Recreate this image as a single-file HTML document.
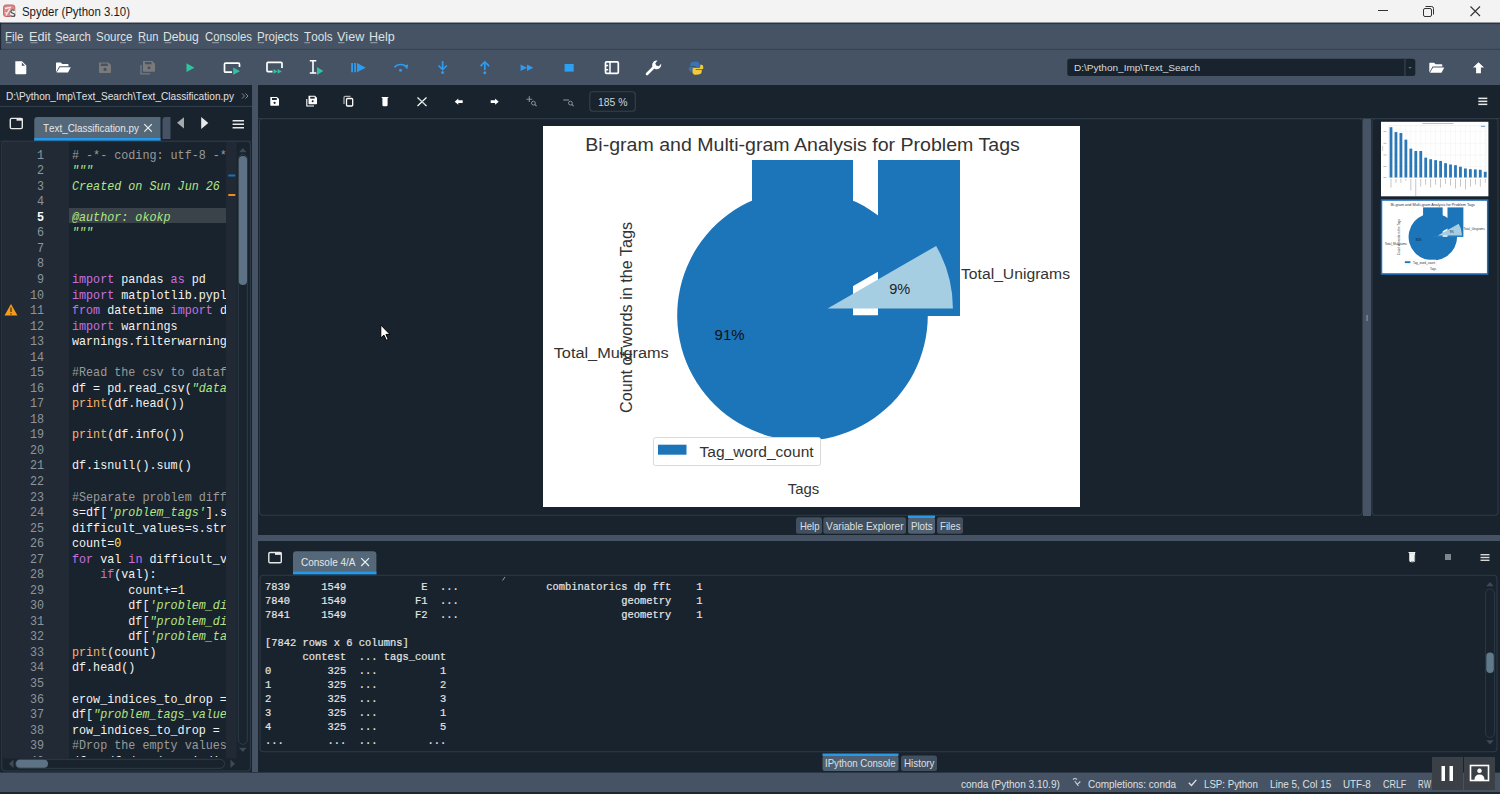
<!DOCTYPE html>
<html><head><meta charset="utf-8"><title>Spyder</title><style>*{margin:0;padding:0;box-sizing:border-box}
html,body{width:1500px;height:794px;overflow:hidden;background:#19232D}
.t{position:absolute;white-space:pre;line-height:1;font-kerning:none}
svg{position:absolute;left:0;top:0}
</style></head>
<body>
<svg width="1500" height="794" viewBox="0 0 1500 794" shape-rendering="geometricPrecision">
<rect x="0" y="0" width="1500" height="22.8" fill="#f3f3f3" />
<rect x="0" y="22.8" width="1500" height="62.2" fill="#455364" />
<rect x="0" y="22.8" width="1500" height="1.3" fill="#2b3643" />
<rect x="0" y="48.8" width="1500" height="1" fill="#34404d" />
<rect x="0" y="22.8" width="1.1" height="26.8" fill="#1f2935" />
<rect x="0" y="85" width="1500" height="687" fill="#19232D" />
<rect x="252" y="85" width="6" height="687" fill="#455364" />
<rect x="258" y="535" width="1242" height="6" fill="#455364" />
<rect x="0" y="772.6" width="1500" height="19.4" fill="#455364" />
<rect x="0" y="792" width="1500" height="2" fill="#1e262e" />
<rect x="3.6" y="5" width="11.2" height="11.5" rx="2.2" fill="#d88a8a" stroke="#c86464" stroke-width="1"/>
<path d="M5 8.5 L11 7.2 M6 15.5 L10 8.5 M4.8 12.5 L7.5 13.5" stroke="#fbeaea" stroke-width="1.3"/>
<rect x="10.2" y="9.6" width="5" height="7.2" fill="#f3f3f3"/>
<path d="M14.6 10.6 Q13.8 9.9 12.6 9.9 Q10.8 9.9 10.8 11.4 Q10.8 12.6 12.7 13.1 Q14.8 13.6 14.8 14.9 Q14.8 16.4 12.7 16.4 Q11.3 16.4 10.4 15.6" fill="none" stroke="#555" stroke-width="1.35"/>
<rect x="1378" y="10" width="10" height="1" fill="#333" />
<rect x="1423.5" y="8.5" width="8" height="8" rx="1.5" fill="none" stroke="#333" stroke-width="1"/>
<path d="M1425.5 6.5 h6 a2 2 0 0 1 2 2 v6" fill="none" stroke="#333" stroke-width="1"/>
<path d="M1470.5 6.5 L1480 16 M1480 6.5 L1470.5 16" stroke="#333" stroke-width="1.1"/>
<path d="M15.3 61.2 H22 L26.3 65.5 V73.2 Q26.3 74.2 25.3 74.2 H16.3 Q15.3 74.2 15.3 73.2 Z" fill="#ffffff"/>
<path d="M21.8 62.5 L25 65.7 H21.8 Z" fill="#455364"/>
<path d="M56 63.2 Q56 62.5 56.7 62.5 H60.8 L62.3 64 H67.8 Q68.5 64 68.5 64.7 V66.3 H59.3 L56 72.3 Z" fill="#ffffff"/>
<path d="M59.8 67.2 H70.8 L68 72.6 H56.6 Z" fill="#ffffff"/>
<path d="M99 62.5 H108.5 L111 65 V72.3 Q111 73 110.3 73 H99.7 Q99 73 99 72.3 Z" fill="#7a7a7a"/>
<rect x="100.8" y="63.6" width="7" height="2.4" fill="#455364" />
<circle cx="105" cy="69.4" r="1.6" fill="#455364"/>
<path d="M141 65 V73.8 H150" fill="none" stroke="#7a7a7a" stroke-width="1.3"/>
<path d="M143 61 H152.3 L155 63.7 V71 Q155 71.7 154.3 71.7 H143.7 Q143 71.7 143 71 Z" fill="#7a7a7a"/>
<rect x="145" y="62" width="6.5" height="2.3" fill="#455364" />
<circle cx="149" cy="67.8" r="1.5" fill="#455364"/>
<path d="M186.5 63.3 L194.5 67.7 L186.5 72 Z" fill="#2ec4a0"/>
<path d="M232 72.2 H225.5 Q224.5 72.2 224.5 71.2 V64.2 Q224.5 63.2 225.5 63.2 H238.5 Q239.5 63.2 239.5 64.2 V67" fill="none" stroke="#ffffff" stroke-width="1.7"/>
<path d="M233.2 67.6 L240 71.2 L233.2 74.8 Z" fill="#2ec4a0"/>
<path d="M272.5 71.6 H268 Q267 71.6 267 70.6 V63.4 Q267 62.4 268 62.4 H281 Q282 62.4 282 63.4 V68" fill="none" stroke="#ffffff" stroke-width="1.7"/>
<path d="M273.5 69 L277.5 71.4 L273.5 73.8 Z M277.6 69 L281.8 71.4 L277.6 73.8 Z" fill="#2ec4a0"/>
<path d="M309.8 60.8 H316.3 M309.8 73 H316.3 M313 60.8 V73" fill="none" stroke="#ffffff" stroke-width="1.6"/>
<path d="M317 67 L323.3 71 L317 75 Z" fill="#2ec4a0"/>
<path d="M351.2 63 H353 V72.3 H351.2 Z M354.2 63 H356 V72.3 H354.2 Z M357 63 L365.8 67.65 L357 72.3 Z" fill="#2d9cf0"/>
<path d="M394.5 67.2 A7 5 0 0 1 406 66.2" fill="none" stroke="#2d9cf0" stroke-width="1.7"/>
<path d="M403.5 65.5 L408.3 64.5 L407.3 69.3 Z" fill="#2d9cf0"/>
<circle cx="400.5" cy="70.3" r="1.5" fill="#2d9cf0"/>
<path d="M442.6 61 V69" fill="none" stroke="#2d9cf0" stroke-width="1.7"/>
<path d="M438.5 65.5 L442.6 69.6 L446.8 65.5" fill="none" stroke="#2d9cf0" stroke-width="1.7"/>
<circle cx="442.6" cy="72.6" r="1.5" fill="#2d9cf0"/>
<path d="M484.8 62 V70" fill="none" stroke="#2d9cf0" stroke-width="1.7"/>
<path d="M480.5 66.2 L484.8 62 L489.2 66.2" fill="none" stroke="#2d9cf0" stroke-width="1.7"/>
<circle cx="484.8" cy="72.7" r="1.5" fill="#2d9cf0"/>
<path d="M520.6 64.6 L527 67.8 L520.6 71 Z M527 64.6 L533.4 67.8 L527 71 Z" fill="#2d9cf0"/>
<rect x="564.6" y="64" width="9.1" height="7.6" fill="#2ba0f5" />
<rect x="605.5" y="61.8" width="12.8" height="11.6" rx="1.2" fill="none" stroke="#ffffff" stroke-width="1.7"/>
<path d="M610 62 V73.2 M606 65.5 H608.2 M606 69.8 H608.2" fill="none" stroke="#ffffff" stroke-width="1.5"/>
<path d="M647 74 L654.5 66.5" stroke="#ffffff" stroke-width="2.6" stroke-linecap="round"/>
<path d="M652.5 66.8 A4.6 4.6 0 0 1 657.5 60.6 L655.3 63.2 L656.2 65.6 L658.8 66.3 L661.2 63.8 A4.6 4.6 0 0 1 655 69 Z" fill="#ffffff"/>
<path d="M696 61.5 Q690.2 61.5 690.3 64.5 V66.2 H696.3 V66.9 H689.8 Q688.8 67 688.8 68.5 Q688.8 71.4 690.6 71.4 H691.8 V69.5 Q691.8 68.2 693.2 68.2 H698.3 Q699.5 68.2 699.5 66.9 V64.3 Q699.5 61.5 696 61.5 Z" fill="#3774b8"/>
<path d="M696 74.7 Q701.8 74.7 701.7 71.7 V70 H695.7 V69.3 H702.2 Q703.3 69.2 703.3 67.7 Q703.3 64.8 701.4 64.8 H700.2 V66.7 Q700.2 68 698.8 68 H693.7 Q692.5 68 692.5 69.3 V71.9 Q692.5 74.7 696 74.7 Z" fill="#f2cb3c"/>
<rect x="1067.3" y="58.7" width="348" height="17.3" rx="2.5" fill="#19232D"/>
<rect x="1404" y="58.7" width="1.8" height="17.3" fill="#2c3844" />
<path d="M1408.3 67 h3.4 l-1.7 1.7z" fill="#60798b"/>
<path d="M1428.5 63 Q1428.5 62.3 1429.2 62.3 H1433.3 L1434.8 63.8 H1440.8 Q1441.5 63.8 1441.5 64.5 V66 H1431.8 L1428.5 72 Z" fill="#ffffff" transform="translate(0.8 0.5)"/>
<path d="M1432.3 66.9 H1443.5 L1440.7 72.3 H1429.1 Z" fill="#ffffff" transform="translate(0.8 0.5)"/>
<path d="M1478.5 62.3 L1484 67.6 H1480.9 V73.3 H1476.1 V67.6 H1473 Z" fill="#ffffff"/>
<rect x="6" y="42.2" width="5.5" height="1" fill="#9aa4ae" />
<rect x="30.5" y="42.2" width="7.0" height="1" fill="#9aa4ae" />
<rect x="56.7" y="42.2" width="6.0" height="1" fill="#9aa4ae" />
<rect x="120" y="42.2" width="6" height="1" fill="#9aa4ae" />
<rect x="138.7" y="42.2" width="6.600000000000023" height="1" fill="#9aa4ae" />
<rect x="164.7" y="42.2" width="6.600000000000023" height="1" fill="#9aa4ae" />
<rect x="212" y="42.2" width="7" height="1" fill="#9aa4ae" />
<rect x="258" y="42.2" width="6" height="1" fill="#9aa4ae" />
<rect x="304.3" y="42.2" width="5.699999999999989" height="1" fill="#9aa4ae" />
<rect x="338" y="42.2" width="6.5" height="1" fill="#9aa4ae" />
<rect x="370.3" y="42.2" width="7.199999999999989" height="1" fill="#9aa4ae" />
<path d="M242 93.5 l2.5 2.5 l-2.5 2.5 M245.5 93.5 l2.5 2.5 l-2.5 2.5" fill="none" stroke="#7f8b96" stroke-width="1"/>
<rect x="0" y="105.9" width="252" height="1" fill="#34424f" />
<rect x="10.3" y="118.4" width="12" height="10.2" rx="1.3" fill="none" stroke="#e8e8e8" stroke-width="1.4"/>
<rect x="16.5" y="118.2" width="6" height="2.5" fill="#e8e8e8" />
<path d="M34.3 141 V120 Q34.3 117 37.3 117 H160.5 V141 Z" fill="#54687A"/>
<rect x="34.3" y="138" width="126.2" height="3" fill="#259AE9" />
<path d="M144.3 124.2 L151.8 131.7 M151.8 124.2 L144.3 131.7" stroke="#eceff1" stroke-width="1.2"/>
<path d="M162.5 139 V120 Q162.5 117 165.5 117 H170.5 V139 Z" fill="#455364"/>
<path d="M184 117.3 L177 122.8 L184 128.5 Z" fill="#a5a9ad"/>
<path d="M201.2 117 L208.3 123 L201.2 129 Z" fill="#e8e8e8"/>
<rect x="232.6" y="120" width="11.4" height="1.5" fill="#e8e8e8" />
<rect x="232.6" y="123.5" width="11.4" height="1.5" fill="#e8e8e8" />
<rect x="232.6" y="127" width="11.4" height="1.5" fill="#e8e8e8" />
<rect x="0" y="140.8" width="252" height="0.8" fill="#2b3946" />
<rect x="1.8" y="141.3" width="248.6" height="629.7" rx="3.5" fill="#19232D" stroke="#2f3b47" stroke-width="1.1"/>
<rect x="2.5" y="142" width="66.5" height="616.5" fill="#222b35" />
<rect x="226" y="142" width="10.5" height="616.5" fill="#212a34" />
<rect x="69" y="208" width="157" height="15" fill="#3a424a" />
<rect x="228.3" y="174.5" width="7" height="2" fill="#1a72bb" />
<rect x="228.3" y="194" width="7" height="2" fill="#f08a24" />
<path d="M239 152.3 L242.8 148 L246.6 152.3 Z" fill="#3c4a57"/>
<rect x="238.3" y="154.5" width="9" height="589.8" rx="4.5" fill="none" stroke="#2f3b47" stroke-width="1"/>
<rect x="238.8" y="156" width="8.2" height="129" rx="4.1" fill="#5d7385"/>
<path d="M239 747.8 L242.8 752 L246.6 747.8 Z" fill="#3c4a57"/>
<path d="M13.5 759.5 L9 763.8 L13.5 768 Z" fill="#3c4a57"/>
<rect x="15.5" y="759.3" width="209" height="9" rx="4.5" fill="none" stroke="#2f3b47" stroke-width="1"/>
<rect x="16" y="759.8" width="32" height="8" rx="4" fill="#5d7385"/>
<path d="M230.5 759.5 L235 763.8 L230.5 768 Z" fill="#3c4a57"/>
<path d="M11 304 L17.5 315.5 H4.5 Z" fill="#f39c1f"/>
<path d="M11 307.5 V312 M11 313.3 V314.5" stroke="#3a2a10" stroke-width="1.2"/>
<rect x="258" y="118" width="1242" height="1" fill="#2f3b47" />
<path d="M270.3 97 H277 L279 99 V105 Q279 105.7 278.3 105.7 H271 Q270.3 105.7 270.3 105 Z" fill="#ffffff"/>
<rect x="272" y="98" width="4.8" height="2" fill="#19232D" />
<circle cx="274.6" cy="102.8" r="1.1" fill="#19232D"/>
<path d="M306.8 99 V106 H314" fill="none" stroke="#ffffff" stroke-width="1.1"/>
<path d="M308.5 95.8 H315 L317 97.8 V103.6 Q317 104.3 316.3 104.3 H309.2 Q308.5 104.3 308.5 103.6 Z" fill="#ffffff"/>
<rect x="310.2" y="96.8" width="4.5" height="1.8" fill="#19232D" />
<circle cx="312.7" cy="101.3" r="1" fill="#19232D"/>
<path d="M344 104 V97.5 Q344 96.3 345.2 96.3 H350.5" fill="none" stroke="#aeb2b6" stroke-width="1.2"/>
<rect x="346.5" y="98.5" width="6.2" height="7.5" rx="1" fill="none" stroke="#ffffff" stroke-width="1.3"/>
<path d="M381.7 97.5 H388.3 M383 98.3 V105 Q383 105.7 383.7 105.7 H386.3 Q387 105.7 387 105 V98.3 Z" fill="#ffffff" stroke="#ffffff" stroke-width="1.2"/>
<path d="M417.5 97.5 L426.5 106 M426.5 97.5 L417.5 106" stroke="#ffffff" stroke-width="1.2"/>
<path d="M419 98.5 L425.5 105" stroke="#8e959c" stroke-width="0.8"/>
<path d="M454.7 101.7 L458.3 98.6 V100.3 H462.7 V103.1 H458.3 V104.8 Z" fill="#ffffff"/>
<path d="M498.7 101.7 L495.1 98.6 V100.3 H490.7 V103.1 H495.1 V104.8 Z" fill="#ffffff"/>
<path d="M529.3 96.3 V102 M526.5 99.2 H532.2" stroke="#8a9096" stroke-width="1.1"/>
<circle cx="533.4" cy="103.1" r="1.9" fill="none" stroke="#8a9096" stroke-width="1"/><path d="M534.8 104.5 L536.6 106.2" stroke="#8a9096" stroke-width="1.1"/>
<path d="M563.3 100 H569" stroke="#8a9096" stroke-width="1.1"/>
<circle cx="570.4" cy="103.1" r="1.9" fill="none" stroke="#8a9096" stroke-width="1"/><path d="M571.8 104.5 L573.6 106.2" stroke="#8a9096" stroke-width="1.1"/>
<rect x="589.8" y="91.8" width="45.5" height="19.5" rx="3" fill="none" stroke="#34414e" stroke-width="1.1"/>
<rect x="1478.3" y="97.6" width="9" height="1.5" fill="#e8e8e8" />
<rect x="1478.3" y="100.6" width="9" height="1.5" fill="#e8e8e8" />
<rect x="1478.3" y="103.6" width="9" height="1.5" fill="#e8e8e8" />
<rect x="259.5" y="118.8" width="1103" height="396.5" rx="3.5" fill="#19232D" stroke="#2f3b47" stroke-width="1.1"/>
<rect x="1363" y="119" width="8" height="397" fill="#455364" />
<rect x="1372" y="118.8" width="126" height="396.5" rx="3.5" fill="#19232D" stroke="#2f3b47" stroke-width="1.1"/>
<g id="chart"><rect x="543" y="126" width="537" height="381" fill="#ffffff"/><rect x="752" y="160" width="101" height="156" fill="#1c74b9"/><rect x="878" y="160" width="82" height="156" fill="#1c74b9"/><path d="M802.5 315.3 L911.01 252.65 A125.3 125.3 0 1 0 927.8 315.3 Z" fill="#1c74b9"/><path d="M827.61 308.57 L952.91 308.57 A125.3 125.3 0 0 0 936.13 245.92 Z" fill="#a6cee3"/><rect x="653.5" y="437.5" width="167" height="28" rx="2" fill="#fff" stroke="#d9d9d9" stroke-width="1"/><rect x="658" y="444.7" width="28.5" height="10" fill="#1c74b9"/><text x="585.3" y="151.1" font-family="Liberation Sans" font-size="18.3" fill="#333333" textLength="434.5" lengthAdjust="spacingAndGlyphs" >Bi-gram and Multi-gram Analysis for Problem Tags</text><text x="961" y="278.6" font-family="Liberation Sans" font-size="15.3" fill="#333333" textLength="109" lengthAdjust="spacingAndGlyphs" >Total_Unigrams</text><text x="553.7" y="357.5" font-family="Liberation Sans" font-size="15.3" fill="#333333" textLength="115" lengthAdjust="spacingAndGlyphs" >Total_Mulgrams</text><text x="889.2" y="294.2" font-family="Liberation Sans" font-size="15.3" fill="#222222" textLength="21" lengthAdjust="spacingAndGlyphs" >9%</text><text x="714.6" y="339.7" font-family="Liberation Sans" font-size="15.3" fill="#111111" textLength="30" lengthAdjust="spacingAndGlyphs" >91%</text><text x="699.6" y="457" font-family="Liberation Sans" font-size="15.3" fill="#333333" textLength="114" lengthAdjust="spacingAndGlyphs" >Tag_word_count</text><text x="787.8" y="493.6" font-family="Liberation Sans" font-size="15.3" fill="#333333" textLength="31.5" lengthAdjust="spacingAndGlyphs" >Tags</text><text x="0" y="0" font-family="Liberation Sans" font-size="16.5" fill="#333333" textLength="191" lengthAdjust="spacingAndGlyphs" transform="translate(631.7 413) rotate(-90)">Count of words in the Tags</text></g>
<rect x="1381" y="121.8" width="107.4" height="74.5" fill="#ffffff" />
<rect x="1388.5" y="125.5" width="97.5" height="52" fill="none" stroke="#e6e6e6" stroke-width="0.4"/>
<line x1="1391.00" y1="125.5" x2="1391.00" y2="177.5" stroke="#ececec" stroke-width="0.35"/>
<line x1="1395.96" y1="125.5" x2="1395.96" y2="177.5" stroke="#ececec" stroke-width="0.35"/>
<line x1="1400.92" y1="125.5" x2="1400.92" y2="177.5" stroke="#ececec" stroke-width="0.35"/>
<line x1="1405.88" y1="125.5" x2="1405.88" y2="177.5" stroke="#ececec" stroke-width="0.35"/>
<line x1="1410.84" y1="125.5" x2="1410.84" y2="177.5" stroke="#ececec" stroke-width="0.35"/>
<line x1="1415.80" y1="125.5" x2="1415.80" y2="177.5" stroke="#ececec" stroke-width="0.35"/>
<line x1="1420.76" y1="125.5" x2="1420.76" y2="177.5" stroke="#ececec" stroke-width="0.35"/>
<line x1="1425.72" y1="125.5" x2="1425.72" y2="177.5" stroke="#ececec" stroke-width="0.35"/>
<line x1="1430.68" y1="125.5" x2="1430.68" y2="177.5" stroke="#ececec" stroke-width="0.35"/>
<line x1="1435.64" y1="125.5" x2="1435.64" y2="177.5" stroke="#ececec" stroke-width="0.35"/>
<line x1="1440.60" y1="125.5" x2="1440.60" y2="177.5" stroke="#ececec" stroke-width="0.35"/>
<line x1="1445.56" y1="125.5" x2="1445.56" y2="177.5" stroke="#ececec" stroke-width="0.35"/>
<line x1="1450.52" y1="125.5" x2="1450.52" y2="177.5" stroke="#ececec" stroke-width="0.35"/>
<line x1="1455.48" y1="125.5" x2="1455.48" y2="177.5" stroke="#ececec" stroke-width="0.35"/>
<line x1="1460.44" y1="125.5" x2="1460.44" y2="177.5" stroke="#ececec" stroke-width="0.35"/>
<line x1="1465.40" y1="125.5" x2="1465.40" y2="177.5" stroke="#ececec" stroke-width="0.35"/>
<line x1="1470.36" y1="125.5" x2="1470.36" y2="177.5" stroke="#ececec" stroke-width="0.35"/>
<line x1="1475.32" y1="125.5" x2="1475.32" y2="177.5" stroke="#ececec" stroke-width="0.35"/>
<line x1="1480.28" y1="125.5" x2="1480.28" y2="177.5" stroke="#ececec" stroke-width="0.35"/>
<line x1="1485.24" y1="125.5" x2="1485.24" y2="177.5" stroke="#ececec" stroke-width="0.35"/>
<line x1="1388.5" y1="131.5" x2="1486" y2="131.5" stroke="#ececec" stroke-width="0.35"/>
<line x1="1388.5" y1="143.3" x2="1486" y2="143.3" stroke="#ececec" stroke-width="0.35"/>
<line x1="1388.5" y1="155" x2="1486" y2="155" stroke="#ececec" stroke-width="0.35"/>
<line x1="1388.5" y1="166.5" x2="1486" y2="166.5" stroke="#ececec" stroke-width="0.35"/>
<rect x="1389.60" y="127.21" width="2.8" height="50.29" fill="#2a78b8"/>
<rect x="1390.60" y="179" width="0.8" height="8.55" fill="#b8b8b8"/>
<rect x="1394.56" y="132.11" width="2.8" height="45.39" fill="#2a78b8"/>
<rect x="1395.56" y="179" width="0.8" height="3.80" fill="#b8b8b8"/>
<rect x="1399.52" y="133.03" width="2.8" height="44.47" fill="#2a78b8"/>
<rect x="1400.52" y="179" width="0.8" height="3.80" fill="#b8b8b8"/>
<rect x="1404.48" y="139.64" width="2.8" height="37.86" fill="#2a78b8"/>
<rect x="1405.48" y="179" width="0.8" height="1.90" fill="#b8b8b8"/>
<rect x="1409.44" y="148.64" width="2.8" height="28.86" fill="#2a78b8"/>
<rect x="1410.44" y="179" width="0.8" height="11.40" fill="#b8b8b8"/>
<rect x="1414.40" y="151.02" width="2.8" height="26.48" fill="#2a78b8"/>
<rect x="1415.40" y="179" width="0.8" height="17.10" fill="#b8b8b8"/>
<rect x="1419.36" y="151.02" width="2.8" height="26.48" fill="#2a78b8"/>
<rect x="1420.36" y="179" width="0.8" height="7.60" fill="#b8b8b8"/>
<rect x="1424.32" y="157.63" width="2.8" height="19.87" fill="#2a78b8"/>
<rect x="1425.32" y="179" width="0.8" height="5.70" fill="#b8b8b8"/>
<rect x="1429.28" y="159.21" width="2.8" height="18.29" fill="#2a78b8"/>
<rect x="1430.28" y="179" width="0.8" height="8.55" fill="#b8b8b8"/>
<rect x="1434.24" y="160.14" width="2.8" height="17.36" fill="#2a78b8"/>
<rect x="1435.24" y="179" width="0.8" height="5.70" fill="#b8b8b8"/>
<rect x="1439.20" y="160.93" width="2.8" height="16.57" fill="#2a78b8"/>
<rect x="1440.20" y="179" width="0.8" height="8.55" fill="#b8b8b8"/>
<rect x="1444.16" y="163.18" width="2.8" height="14.32" fill="#2a78b8"/>
<rect x="1445.16" y="179" width="0.8" height="4.75" fill="#b8b8b8"/>
<rect x="1449.12" y="164.50" width="2.8" height="13.00" fill="#2a78b8"/>
<rect x="1450.12" y="179" width="0.8" height="6.65" fill="#b8b8b8"/>
<rect x="1454.08" y="165.17" width="2.8" height="12.33" fill="#2a78b8"/>
<rect x="1455.08" y="179" width="0.8" height="9.50" fill="#b8b8b8"/>
<rect x="1459.04" y="166.75" width="2.8" height="10.75" fill="#2a78b8"/>
<rect x="1460.04" y="179" width="0.8" height="7.60" fill="#b8b8b8"/>
<rect x="1464.00" y="168.47" width="2.8" height="9.03" fill="#2a78b8"/>
<rect x="1465.00" y="179" width="0.8" height="10.45" fill="#b8b8b8"/>
<rect x="1468.96" y="169.13" width="2.8" height="8.37" fill="#2a78b8"/>
<rect x="1469.96" y="179" width="0.8" height="7.60" fill="#b8b8b8"/>
<rect x="1473.92" y="169.40" width="2.8" height="8.10" fill="#2a78b8"/>
<rect x="1474.92" y="179" width="0.8" height="5.70" fill="#b8b8b8"/>
<rect x="1478.88" y="169.79" width="2.8" height="7.71" fill="#2a78b8"/>
<rect x="1479.88" y="179" width="0.8" height="7.60" fill="#b8b8b8"/>
<rect x="1483.84" y="171.78" width="2.8" height="5.72" fill="#2a78b8"/>
<rect x="1484.84" y="179" width="0.8" height="3.80" fill="#b8b8b8"/>
<rect x="1422.5" y="123" width="31" height="0.9" fill="#b8b8b8"/>
<rect x="1481" y="125.8" width="4" height="1.2" fill="#7fa8d0"/>
<rect x="1383.5" y="131.1" width="3" height="0.8" fill="#b0b0b0"/>
<rect x="1383.5" y="142.9" width="3" height="0.8" fill="#b0b0b0"/>
<rect x="1383.5" y="154.6" width="3" height="0.8" fill="#b0b0b0"/>
<rect x="1383.5" y="166.1" width="3" height="0.8" fill="#b0b0b0"/>
<rect x="1383.5" y="177.1" width="3" height="0.8" fill="#b0b0b0"/>
<rect x="1382.3" y="146" width="0.8" height="5" fill="#c0c0c0"/>
<rect x="1381.6" y="200" width="106" height="74" fill="#fff" stroke="#1d6fc0" stroke-width="1.6"/>
<g transform="translate(1382.6 201) scale(0.1937 0.1890) translate(-543 -126)"><use href="#chart"/></g>
<rect x="796" y="517.3" width="26" height="16.40000000000009" rx="2.5" fill="#414f5e"/>
<rect x="823.3" y="517.3" width="82.70000000000005" height="16.40000000000009" rx="2.5" fill="#414f5e"/>
<rect x="908" y="517.5" width="27" height="16.200000000000045" rx="2.5" fill="#4f6073"/>
<rect x="908" y="515.5" width="27" height="2.5" fill="#259AE9" />
<rect x="937" y="517.3" width="26" height="16.40000000000009" rx="2.5" fill="#414f5e"/>
<rect x="268.8" y="552.5" width="12.5" height="10.3" rx="1.3" fill="none" stroke="#e8e8e8" stroke-width="1.4"/>
<rect x="275" y="552.3" width="6.3" height="2.6" fill="#e8e8e8" />
<path d="M293 574 V554.5 Q293 551.3 296.2 551.3 H373.2 Q376.4 551.3 376.4 554.5 V574 Z" fill="#54687A"/>
<rect x="293" y="571.7" width="83.4" height="2.8" fill="#259AE9" />
<path d="M361.2 561 L369 568.8 M369 561 L361.2 568.8" stroke="#eceff1" stroke-width="1.2" transform="translate(0 -2.8)"/>
<path d="M1408.5 552.5 H1415.3 M1409.8 553.3 V560.6 Q1409.8 561.8 1411 561.8 H1413.3 Q1414.5 561.8 1414.5 560.6 V553.3 Z" fill="#f0f0f0" stroke="#f0f0f0" stroke-width="1.1"/>
<path d="M1414.6 555 V561.5 H1411" fill="none" stroke="#9aa0a6" stroke-width="0.9"/>
<rect x="1445" y="554" width="6" height="6" fill="#7d858d" />
<rect x="1480.5" y="554" width="9" height="1.4" fill="#d8d8d8" />
<rect x="1480.5" y="556.8" width="9" height="1.4" fill="#d8d8d8" />
<rect x="1480.5" y="559.6" width="9" height="1.4" fill="#d8d8d8" />
<rect x="260" y="575.2" width="1237" height="176.5" rx="3.5" fill="#19232D" stroke="#2f3b47" stroke-width="1.1"/>
<path d="M1486.3 586.3 L1490 582 L1493.7 586.3 Z" fill="#3c4a57"/>
<rect x="1485.6" y="589" width="8.8" height="148.5" rx="4.2" fill="none" stroke="#2f3b47" stroke-width="0.9"/>
<rect x="1486.3" y="652.5" width="7.5" height="20.4" rx="3.6" fill="#60798b"/>
<path d="M1486.3 740.3 L1490 744.6 L1493.7 740.3 Z" fill="#3c4a57"/>
<path d="M505 577 L502.5 580.5" stroke="#9aa0a6" stroke-width="1"/>
<rect x="822.5" y="755.5" width="76.0" height="15.5" rx="2.5" fill="#4f6073"/>
<rect x="822.5" y="753.5" width="76.0" height="2.5" fill="#259AE9" />
<rect x="901" y="755.5" width="36" height="15.5" rx="2.5" fill="#414f5e"/>
<path d="M1073 779.5 Q1075 777.5 1077 779.5 M1074.8 781 L1077.3 784.5 L1080.3 781.5 M1076 783 L1078.5 786" fill="none" stroke="#cfd3d6" stroke-width="1.1"/>
<path d="M1188.8 782.8 L1191.5 785.5 L1196.3 779.8" fill="none" stroke="#e0e2e4" stroke-width="1.3"/>
<rect x="1432" y="757" width="31" height="33" fill="#3b4046" />
<rect x="1464" y="757" width="31" height="33" fill="#3b4046" />
<rect x="1441.5" y="766" width="3.5" height="15" fill="#ffffff" />
<rect x="1449.5" y="766" width="3.5" height="15" fill="#ffffff" />
<rect x="1470.5" y="765.5" width="18" height="15" fill="none" stroke="#fff" stroke-width="1.6"/>
<path d="M1474.5 780 Q1474.5 774.5 1479.5 774.5 Q1484.5 774.5 1484.5 780 Z M1479.5 768.5 a2.3 2.3 0 1 0 0.01 0" fill="#fff"/>
<path d="M380.8 325 L380.8 338 L383.9 335.1 L386.4 340.3 L388.3 339.4 L385.9 334.4 L390 334.4 Z" fill="#fff" stroke="#000" stroke-width="1" stroke-linejoin="miter"/>
<rect x="1366.6" y="315" width="0.9" height="6" fill="#9aa6b2" />
</svg>
<div class="t" style="left:21.50px;top:5.40px;font-size:13px;color:#1a1a1a;font-family:'Liberation Sans',sans-serif;transform:scaleX(0.8791);transform-origin:0 0;">Spyder (Python 3.10)</div>
<div class="t" style="left:5.20px;top:30.54px;font-size:12px;color:#dfe1e3;font-family:'Liberation Sans',sans-serif;transform:scaleX(0.9568);transform-origin:0 0;">File</div>
<div class="t" style="left:28.50px;top:30.54px;font-size:12px;color:#dfe1e3;font-family:'Liberation Sans',sans-serif;transform:scaleX(1.0591);transform-origin:0 0;">Edit</div>
<div class="t" style="left:55.20px;top:30.54px;font-size:12px;color:#dfe1e3;font-family:'Liberation Sans',sans-serif;transform:scaleX(0.9442);transform-origin:0 0;">Search</div>
<div class="t" style="left:95.90px;top:30.54px;font-size:12px;color:#dfe1e3;font-family:'Liberation Sans',sans-serif;transform:scaleX(0.9600);transform-origin:0 0;">Source</div>
<div class="t" style="left:137.90px;top:30.54px;font-size:12px;color:#dfe1e3;font-family:'Liberation Sans',sans-serif;transform:scaleX(0.9312);transform-origin:0 0;">Run</div>
<div class="t" style="left:163.20px;top:30.54px;font-size:12px;color:#dfe1e3;font-family:'Liberation Sans',sans-serif;transform:scaleX(1.0152);transform-origin:0 0;">Debug</div>
<div class="t" style="left:205.10px;top:30.54px;font-size:12px;color:#dfe1e3;font-family:'Liberation Sans',sans-serif;transform:scaleX(0.9395);transform-origin:0 0;">Consoles</div>
<div class="t" style="left:257.10px;top:30.54px;font-size:12px;color:#dfe1e3;font-family:'Liberation Sans',sans-serif;transform:scaleX(0.9574);transform-origin:0 0;">Projects</div>
<div class="t" style="left:303.50px;top:30.54px;font-size:12px;color:#dfe1e3;font-family:'Liberation Sans',sans-serif;transform:scaleX(0.9747);transform-origin:0 0;">Tools</div>
<div class="t" style="left:337.00px;top:30.54px;font-size:12px;color:#dfe1e3;font-family:'Liberation Sans',sans-serif;transform:scaleX(1.0458);transform-origin:0 0;">View</div>
<div class="t" style="left:369.20px;top:30.54px;font-size:12px;color:#dfe1e3;font-family:'Liberation Sans',sans-serif;transform:scaleX(1.0413);transform-origin:0 0;">Help</div>
<div class="t" style="left:1073.50px;top:63.26px;font-size:9.5px;color:#d8dadc;font-family:'Liberation Sans',sans-serif;transform:scaleX(1.0559);transform-origin:0 0;">D:\Python_Imp\Text_Search</div>
<div class="t" style="left:6.00px;top:91.41px;font-size:10.5px;color:#e0e1e3;font-family:'Liberation Sans',sans-serif;transform:scaleX(0.9623);transform-origin:0 0;">D:\Python_Imp\Text_Search\Text_Classification.py</div>
<div class="t" style="left:42.50px;top:123.41px;font-size:10.5px;color:#e6e7e8;font-family:'Liberation Sans',sans-serif;transform:scaleX(0.9400);transform-origin:0 0;">Text_Classification.py</div>
<div style="position:absolute;left:69px;top:142px;width:157px;height:615px;overflow:hidden">
<div class="t" style="left:3px;top:6.64px;font-size:13.0px;font-family:'Liberation Mono',monospace;transform:scaleX(0.9026);transform-origin:0 0"><span style="color:#9a9a9a"># -*- coding: utf-8 -*</span></div>
<div class="t" style="left:3px;top:22.18px;font-size:13.0px;font-family:'Liberation Mono',monospace;transform:scaleX(0.9026);transform-origin:0 0"><span style="color:#b0e686;font-style:italic">&quot;&quot;&quot;</span></div>
<div class="t" style="left:3px;top:37.72px;font-size:13.0px;font-family:'Liberation Mono',monospace;transform:scaleX(0.9026);transform-origin:0 0"><span style="color:#b0e686;font-style:italic">Created on Sun Jun 26</span></div>
<div class="t" style="left:3px;top:68.80px;font-size:13.0px;font-family:'Liberation Mono',monospace;transform:scaleX(0.9026);transform-origin:0 0"><span style="color:#b0e686;font-style:italic">@author: okokp</span></div>
<div class="t" style="left:3px;top:84.34px;font-size:13.0px;font-family:'Liberation Mono',monospace;transform:scaleX(0.9026);transform-origin:0 0"><span style="color:#b0e686;font-style:italic">&quot;&quot;&quot;</span></div>
<div class="t" style="left:3px;top:130.96px;font-size:13.0px;font-family:'Liberation Mono',monospace;transform:scaleX(0.9026);transform-origin:0 0"><span style="color:#c670e0">import</span><span style="color:#f2f2f2"> pandas </span><span style="color:#c670e0">as</span><span style="color:#f2f2f2"> pd</span></div>
<div class="t" style="left:3px;top:146.50px;font-size:13.0px;font-family:'Liberation Mono',monospace;transform:scaleX(0.9026);transform-origin:0 0"><span style="color:#c670e0">import</span><span style="color:#f2f2f2"> matplotlib.pypl</span></div>
<div class="t" style="left:3px;top:162.04px;font-size:13.0px;font-family:'Liberation Mono',monospace;transform:scaleX(0.9026);transform-origin:0 0"><span style="color:#c670e0">from</span><span style="color:#f2f2f2"> datetime </span><span style="color:#c670e0">import</span><span style="color:#f2f2f2"> d</span></div>
<div class="t" style="left:3px;top:177.58px;font-size:13.0px;font-family:'Liberation Mono',monospace;transform:scaleX(0.9026);transform-origin:0 0"><span style="color:#c670e0">import</span><span style="color:#f2f2f2"> warnings</span></div>
<div class="t" style="left:3px;top:193.12px;font-size:13.0px;font-family:'Liberation Mono',monospace;transform:scaleX(0.9026);transform-origin:0 0"><span style="color:#f2f2f2">warnings.filterwarning</span></div>
<div class="t" style="left:3px;top:224.20px;font-size:13.0px;font-family:'Liberation Mono',monospace;transform:scaleX(0.9026);transform-origin:0 0"><span style="color:#9a9a9a">#Read the csv to dataf</span></div>
<div class="t" style="left:3px;top:239.74px;font-size:13.0px;font-family:'Liberation Mono',monospace;transform:scaleX(0.9026);transform-origin:0 0"><span style="color:#f2f2f2">df = pd.read_csv(</span><span style="color:#b0e686;font-style:italic">&quot;data</span></div>
<div class="t" style="left:3px;top:255.28px;font-size:13.0px;font-family:'Liberation Mono',monospace;transform:scaleX(0.9026);transform-origin:0 0"><span style="color:#fab16c">print</span><span style="color:#f2f2f2">(df.head())</span></div>
<div class="t" style="left:3px;top:286.36px;font-size:13.0px;font-family:'Liberation Mono',monospace;transform:scaleX(0.9026);transform-origin:0 0"><span style="color:#fab16c">print</span><span style="color:#f2f2f2">(df.info())</span></div>
<div class="t" style="left:3px;top:317.44px;font-size:13.0px;font-family:'Liberation Mono',monospace;transform:scaleX(0.9026);transform-origin:0 0"><span style="color:#f2f2f2">df.isnull().sum()</span></div>
<div class="t" style="left:3px;top:348.52px;font-size:13.0px;font-family:'Liberation Mono',monospace;transform:scaleX(0.9026);transform-origin:0 0"><span style="color:#9a9a9a">#Separate problem diff</span></div>
<div class="t" style="left:3px;top:364.06px;font-size:13.0px;font-family:'Liberation Mono',monospace;transform:scaleX(0.9026);transform-origin:0 0"><span style="color:#f2f2f2">s=df[</span><span style="color:#b0e686;font-style:italic">&#x27;problem_tags&#x27;</span><span style="color:#f2f2f2">].s</span></div>
<div class="t" style="left:3px;top:379.60px;font-size:13.0px;font-family:'Liberation Mono',monospace;transform:scaleX(0.9026);transform-origin:0 0"><span style="color:#f2f2f2">difficult_values=s.str</span></div>
<div class="t" style="left:3px;top:395.14px;font-size:13.0px;font-family:'Liberation Mono',monospace;transform:scaleX(0.9026);transform-origin:0 0"><span style="color:#f2f2f2">count=</span><span style="color:#faed5c">0</span></div>
<div class="t" style="left:3px;top:410.68px;font-size:13.0px;font-family:'Liberation Mono',monospace;transform:scaleX(0.9026);transform-origin:0 0"><span style="color:#c670e0">for</span><span style="color:#f2f2f2"> val </span><span style="color:#c670e0">in</span><span style="color:#f2f2f2"> difficult_v</span></div>
<div class="t" style="left:3px;top:426.22px;font-size:13.0px;font-family:'Liberation Mono',monospace;transform:scaleX(0.9026);transform-origin:0 0"><span style="color:#f2f2f2">    </span><span style="color:#c670e0">if</span><span style="color:#f2f2f2">(val):</span></div>
<div class="t" style="left:3px;top:441.76px;font-size:13.0px;font-family:'Liberation Mono',monospace;transform:scaleX(0.9026);transform-origin:0 0"><span style="color:#f2f2f2">        count+=</span><span style="color:#faed5c">1</span></div>
<div class="t" style="left:3px;top:457.30px;font-size:13.0px;font-family:'Liberation Mono',monospace;transform:scaleX(0.9026);transform-origin:0 0"><span style="color:#f2f2f2">        df[</span><span style="color:#b0e686;font-style:italic">&#x27;problem_di</span></div>
<div class="t" style="left:3px;top:472.84px;font-size:13.0px;font-family:'Liberation Mono',monospace;transform:scaleX(0.9026);transform-origin:0 0"><span style="color:#f2f2f2">        df[</span><span style="color:#b0e686;font-style:italic">&quot;problem_di</span></div>
<div class="t" style="left:3px;top:488.38px;font-size:13.0px;font-family:'Liberation Mono',monospace;transform:scaleX(0.9026);transform-origin:0 0"><span style="color:#f2f2f2">        df[</span><span style="color:#b0e686;font-style:italic">&#x27;problem_ta</span></div>
<div class="t" style="left:3px;top:503.92px;font-size:13.0px;font-family:'Liberation Mono',monospace;transform:scaleX(0.9026);transform-origin:0 0"><span style="color:#fab16c">print</span><span style="color:#f2f2f2">(count)</span></div>
<div class="t" style="left:3px;top:519.46px;font-size:13.0px;font-family:'Liberation Mono',monospace;transform:scaleX(0.9026);transform-origin:0 0"><span style="color:#f2f2f2">df.head()</span></div>
<div class="t" style="left:3px;top:550.54px;font-size:13.0px;font-family:'Liberation Mono',monospace;transform:scaleX(0.9026);transform-origin:0 0"><span style="color:#f2f2f2">erow_indices_to_drop =</span></div>
<div class="t" style="left:3px;top:566.08px;font-size:13.0px;font-family:'Liberation Mono',monospace;transform:scaleX(0.9026);transform-origin:0 0"><span style="color:#f2f2f2">df[</span><span style="color:#b0e686;font-style:italic">&quot;problem_tags_value</span></div>
<div class="t" style="left:3px;top:581.62px;font-size:13.0px;font-family:'Liberation Mono',monospace;transform:scaleX(0.9026);transform-origin:0 0"><span style="color:#f2f2f2">row_indices_to_drop =</span></div>
<div class="t" style="left:3px;top:597.16px;font-size:13.0px;font-family:'Liberation Mono',monospace;transform:scaleX(0.9026);transform-origin:0 0"><span style="color:#9a9a9a">#Drop the empty values</span></div>
<div class="t" style="left:3px;top:612.70px;font-size:13.0px;font-family:'Liberation Mono',monospace;transform:scaleX(0.9026);transform-origin:0 0"><span style="color:#f2f2f2">df = df.drop(row_indic</span></div>
</div>
<div style="position:absolute;left:0;top:142px;width:69px;height:615px;overflow:hidden">
<div class="t" style="left:36.96px;top:6.64px;font-size:13.0px;color:#8d949b;font-family:'Liberation Mono',monospace;transform:scaleX(0.9026);transform-origin:0 0">1</div>
<div class="t" style="left:36.96px;top:22.18px;font-size:13.0px;color:#8d949b;font-family:'Liberation Mono',monospace;transform:scaleX(0.9026);transform-origin:0 0">2</div>
<div class="t" style="left:36.96px;top:37.72px;font-size:13.0px;color:#8d949b;font-family:'Liberation Mono',monospace;transform:scaleX(0.9026);transform-origin:0 0">3</div>
<div class="t" style="left:36.96px;top:53.26px;font-size:13.0px;color:#8d949b;font-family:'Liberation Mono',monospace;transform:scaleX(0.9026);transform-origin:0 0">4</div>
<div class="t" style="left:36.96px;top:68.80px;font-size:13.0px;color:#ffffff;font-family:'Liberation Mono',monospace;transform:scaleX(0.9026);transform-origin:0 0;font-weight:bold">5</div>
<div class="t" style="left:36.96px;top:84.34px;font-size:13.0px;color:#8d949b;font-family:'Liberation Mono',monospace;transform:scaleX(0.9026);transform-origin:0 0">6</div>
<div class="t" style="left:36.96px;top:99.88px;font-size:13.0px;color:#8d949b;font-family:'Liberation Mono',monospace;transform:scaleX(0.9026);transform-origin:0 0">7</div>
<div class="t" style="left:36.96px;top:115.42px;font-size:13.0px;color:#8d949b;font-family:'Liberation Mono',monospace;transform:scaleX(0.9026);transform-origin:0 0">8</div>
<div class="t" style="left:36.96px;top:130.96px;font-size:13.0px;color:#8d949b;font-family:'Liberation Mono',monospace;transform:scaleX(0.9026);transform-origin:0 0">9</div>
<div class="t" style="left:29.92px;top:146.50px;font-size:13.0px;color:#8d949b;font-family:'Liberation Mono',monospace;transform:scaleX(0.9026);transform-origin:0 0">10</div>
<div class="t" style="left:29.92px;top:162.04px;font-size:13.0px;color:#8d949b;font-family:'Liberation Mono',monospace;transform:scaleX(0.9026);transform-origin:0 0">11</div>
<div class="t" style="left:29.92px;top:177.58px;font-size:13.0px;color:#8d949b;font-family:'Liberation Mono',monospace;transform:scaleX(0.9026);transform-origin:0 0">12</div>
<div class="t" style="left:29.92px;top:193.12px;font-size:13.0px;color:#8d949b;font-family:'Liberation Mono',monospace;transform:scaleX(0.9026);transform-origin:0 0">13</div>
<div class="t" style="left:29.92px;top:208.66px;font-size:13.0px;color:#8d949b;font-family:'Liberation Mono',monospace;transform:scaleX(0.9026);transform-origin:0 0">14</div>
<div class="t" style="left:29.92px;top:224.20px;font-size:13.0px;color:#8d949b;font-family:'Liberation Mono',monospace;transform:scaleX(0.9026);transform-origin:0 0">15</div>
<div class="t" style="left:29.92px;top:239.74px;font-size:13.0px;color:#8d949b;font-family:'Liberation Mono',monospace;transform:scaleX(0.9026);transform-origin:0 0">16</div>
<div class="t" style="left:29.92px;top:255.28px;font-size:13.0px;color:#8d949b;font-family:'Liberation Mono',monospace;transform:scaleX(0.9026);transform-origin:0 0">17</div>
<div class="t" style="left:29.92px;top:270.82px;font-size:13.0px;color:#8d949b;font-family:'Liberation Mono',monospace;transform:scaleX(0.9026);transform-origin:0 0">18</div>
<div class="t" style="left:29.92px;top:286.36px;font-size:13.0px;color:#8d949b;font-family:'Liberation Mono',monospace;transform:scaleX(0.9026);transform-origin:0 0">19</div>
<div class="t" style="left:29.92px;top:301.90px;font-size:13.0px;color:#8d949b;font-family:'Liberation Mono',monospace;transform:scaleX(0.9026);transform-origin:0 0">20</div>
<div class="t" style="left:29.92px;top:317.44px;font-size:13.0px;color:#8d949b;font-family:'Liberation Mono',monospace;transform:scaleX(0.9026);transform-origin:0 0">21</div>
<div class="t" style="left:29.92px;top:332.98px;font-size:13.0px;color:#8d949b;font-family:'Liberation Mono',monospace;transform:scaleX(0.9026);transform-origin:0 0">22</div>
<div class="t" style="left:29.92px;top:348.52px;font-size:13.0px;color:#8d949b;font-family:'Liberation Mono',monospace;transform:scaleX(0.9026);transform-origin:0 0">23</div>
<div class="t" style="left:29.92px;top:364.06px;font-size:13.0px;color:#8d949b;font-family:'Liberation Mono',monospace;transform:scaleX(0.9026);transform-origin:0 0">24</div>
<div class="t" style="left:29.92px;top:379.60px;font-size:13.0px;color:#8d949b;font-family:'Liberation Mono',monospace;transform:scaleX(0.9026);transform-origin:0 0">25</div>
<div class="t" style="left:29.92px;top:395.14px;font-size:13.0px;color:#8d949b;font-family:'Liberation Mono',monospace;transform:scaleX(0.9026);transform-origin:0 0">26</div>
<div class="t" style="left:29.92px;top:410.68px;font-size:13.0px;color:#8d949b;font-family:'Liberation Mono',monospace;transform:scaleX(0.9026);transform-origin:0 0">27</div>
<div class="t" style="left:29.92px;top:426.22px;font-size:13.0px;color:#8d949b;font-family:'Liberation Mono',monospace;transform:scaleX(0.9026);transform-origin:0 0">28</div>
<div class="t" style="left:29.92px;top:441.76px;font-size:13.0px;color:#8d949b;font-family:'Liberation Mono',monospace;transform:scaleX(0.9026);transform-origin:0 0">29</div>
<div class="t" style="left:29.92px;top:457.30px;font-size:13.0px;color:#8d949b;font-family:'Liberation Mono',monospace;transform:scaleX(0.9026);transform-origin:0 0">30</div>
<div class="t" style="left:29.92px;top:472.84px;font-size:13.0px;color:#8d949b;font-family:'Liberation Mono',monospace;transform:scaleX(0.9026);transform-origin:0 0">31</div>
<div class="t" style="left:29.92px;top:488.38px;font-size:13.0px;color:#8d949b;font-family:'Liberation Mono',monospace;transform:scaleX(0.9026);transform-origin:0 0">32</div>
<div class="t" style="left:29.92px;top:503.92px;font-size:13.0px;color:#8d949b;font-family:'Liberation Mono',monospace;transform:scaleX(0.9026);transform-origin:0 0">33</div>
<div class="t" style="left:29.92px;top:519.46px;font-size:13.0px;color:#8d949b;font-family:'Liberation Mono',monospace;transform:scaleX(0.9026);transform-origin:0 0">34</div>
<div class="t" style="left:29.92px;top:535.00px;font-size:13.0px;color:#8d949b;font-family:'Liberation Mono',monospace;transform:scaleX(0.9026);transform-origin:0 0">35</div>
<div class="t" style="left:29.92px;top:550.54px;font-size:13.0px;color:#8d949b;font-family:'Liberation Mono',monospace;transform:scaleX(0.9026);transform-origin:0 0">36</div>
<div class="t" style="left:29.92px;top:566.08px;font-size:13.0px;color:#8d949b;font-family:'Liberation Mono',monospace;transform:scaleX(0.9026);transform-origin:0 0">37</div>
<div class="t" style="left:29.92px;top:581.62px;font-size:13.0px;color:#8d949b;font-family:'Liberation Mono',monospace;transform:scaleX(0.9026);transform-origin:0 0">38</div>
<div class="t" style="left:29.92px;top:597.16px;font-size:13.0px;color:#8d949b;font-family:'Liberation Mono',monospace;transform:scaleX(0.9026);transform-origin:0 0">39</div>
<div class="t" style="left:29.92px;top:612.70px;font-size:13.0px;color:#8d949b;font-family:'Liberation Mono',monospace;transform:scaleX(0.9026);transform-origin:0 0">40</div>
</div>
<div class="t" style="left:597.50px;top:96.71px;font-size:10.5px;color:#cfd3d7;font-family:'Liberation Sans',sans-serif;transform:scaleX(0.9909);transform-origin:0 0;">185 %</div>
<div class="t" style="left:799.50px;top:520.81px;font-size:10.5px;color:#dde0e3;font-family:'Liberation Sans',sans-serif;transform:scaleX(0.9030);transform-origin:0 0;">Help</div>
<div class="t" style="left:826.30px;top:520.81px;font-size:10.5px;color:#dde0e3;font-family:'Liberation Sans',sans-serif;transform:scaleX(0.9623);transform-origin:0 0;">Variable Explorer</div>
<div class="t" style="left:910.80px;top:520.81px;font-size:10.5px;color:#dde0e3;font-family:'Liberation Sans',sans-serif;transform:scaleX(0.9210);transform-origin:0 0;">Plots</div>
<div class="t" style="left:939.80px;top:520.81px;font-size:10.5px;color:#dde0e3;font-family:'Liberation Sans',sans-serif;transform:scaleX(0.9247);transform-origin:0 0;">Files</div>
<div class="t" style="left:300.60px;top:557.58px;font-size:10.3px;color:#e6e7e8;font-family:'Liberation Sans',sans-serif;transform:scaleX(0.9713);transform-origin:0 0;">Console 4/A</div>
<div class="t" style="left:265.3px;top:581.39px;font-size:11.5px;color:#e4e6e8;-webkit-text-stroke:0.2px #e4e6e8;font-family:'Liberation Mono',monospace;transform:scaleX(0.9058);transform-origin:0 0">7839     1549            E  ...              combinatorics dp fft    1</div>
<div class="t" style="left:265.3px;top:595.39px;font-size:11.5px;color:#e4e6e8;-webkit-text-stroke:0.2px #e4e6e8;font-family:'Liberation Mono',monospace;transform:scaleX(0.9058);transform-origin:0 0">7840     1549           F1  ...                          geometry    1</div>
<div class="t" style="left:265.3px;top:609.39px;font-size:11.5px;color:#e4e6e8;-webkit-text-stroke:0.2px #e4e6e8;font-family:'Liberation Mono',monospace;transform:scaleX(0.9058);transform-origin:0 0">7841     1549           F2  ...                          geometry    1</div>
<div class="t" style="left:265.3px;top:637.39px;font-size:11.5px;color:#e4e6e8;-webkit-text-stroke:0.2px #e4e6e8;font-family:'Liberation Mono',monospace;transform:scaleX(0.9058);transform-origin:0 0">[7842 rows x 6 columns]</div>
<div class="t" style="left:265.3px;top:651.39px;font-size:11.5px;color:#e4e6e8;-webkit-text-stroke:0.2px #e4e6e8;font-family:'Liberation Mono',monospace;transform:scaleX(0.9058);transform-origin:0 0">      contest  ... tags_count</div>
<div class="t" style="left:265.3px;top:665.39px;font-size:11.5px;color:#e4e6e8;-webkit-text-stroke:0.2px #e4e6e8;font-family:'Liberation Mono',monospace;transform:scaleX(0.9058);transform-origin:0 0">0         325  ...          1</div>
<div class="t" style="left:265.3px;top:679.39px;font-size:11.5px;color:#e4e6e8;-webkit-text-stroke:0.2px #e4e6e8;font-family:'Liberation Mono',monospace;transform:scaleX(0.9058);transform-origin:0 0">1         325  ...          2</div>
<div class="t" style="left:265.3px;top:693.39px;font-size:11.5px;color:#e4e6e8;-webkit-text-stroke:0.2px #e4e6e8;font-family:'Liberation Mono',monospace;transform:scaleX(0.9058);transform-origin:0 0">2         325  ...          3</div>
<div class="t" style="left:265.3px;top:707.39px;font-size:11.5px;color:#e4e6e8;-webkit-text-stroke:0.2px #e4e6e8;font-family:'Liberation Mono',monospace;transform:scaleX(0.9058);transform-origin:0 0">3         325  ...          1</div>
<div class="t" style="left:265.3px;top:721.39px;font-size:11.5px;color:#e4e6e8;-webkit-text-stroke:0.2px #e4e6e8;font-family:'Liberation Mono',monospace;transform:scaleX(0.9058);transform-origin:0 0">4         325  ...          5</div>
<div class="t" style="left:265.3px;top:735.39px;font-size:11.5px;color:#e4e6e8;-webkit-text-stroke:0.2px #e4e6e8;font-family:'Liberation Mono',monospace;transform:scaleX(0.9058);transform-origin:0 0">...       ...  ...        ...</div>
<div class="t" style="left:825.30px;top:758.31px;font-size:10.5px;color:#dde0e3;font-family:'Liberation Sans',sans-serif;transform:scaleX(0.9150);transform-origin:0 0;">IPython Console</div>
<div class="t" style="left:903.80px;top:758.31px;font-size:10.5px;color:#dde0e3;font-family:'Liberation Sans',sans-serif;transform:scaleX(0.9336);transform-origin:0 0;">History</div>
<div class="t" style="left:961.30px;top:779.31px;font-size:10.5px;color:#dfe1e3;font-family:'Liberation Sans',sans-serif;transform:scaleX(0.9563);transform-origin:0 0;">conda (Python 3.10.9)</div>
<div class="t" style="left:1088.30px;top:779.31px;font-size:10.5px;color:#dfe1e3;font-family:'Liberation Sans',sans-serif;transform:scaleX(0.9482);transform-origin:0 0;">Completions: conda</div>
<div class="t" style="left:1204.30px;top:779.31px;font-size:10.5px;color:#dfe1e3;font-family:'Liberation Sans',sans-serif;transform:scaleX(0.9217);transform-origin:0 0;">LSP: Python</div>
<div class="t" style="left:1270.20px;top:779.31px;font-size:10.5px;color:#dfe1e3;font-family:'Liberation Sans',sans-serif;transform:scaleX(0.9461);transform-origin:0 0;">Line 5, Col 15</div>
<div class="t" style="left:1343.20px;top:779.31px;font-size:10.5px;color:#dfe1e3;font-family:'Liberation Sans',sans-serif;transform:scaleX(0.9346);transform-origin:0 0;">UTF-8</div>
<div class="t" style="left:1383.30px;top:779.31px;font-size:10.5px;color:#dfe1e3;font-family:'Liberation Sans',sans-serif;transform:scaleX(0.8498);transform-origin:0 0;">CRLF</div>
<div class="t" style="left:1418.20px;top:779.31px;font-size:10.5px;color:#dfe1e3;font-family:'Liberation Sans',sans-serif;transform:scaleX(0.7431);transform-origin:0 0;">RW</div>
</body></html>
